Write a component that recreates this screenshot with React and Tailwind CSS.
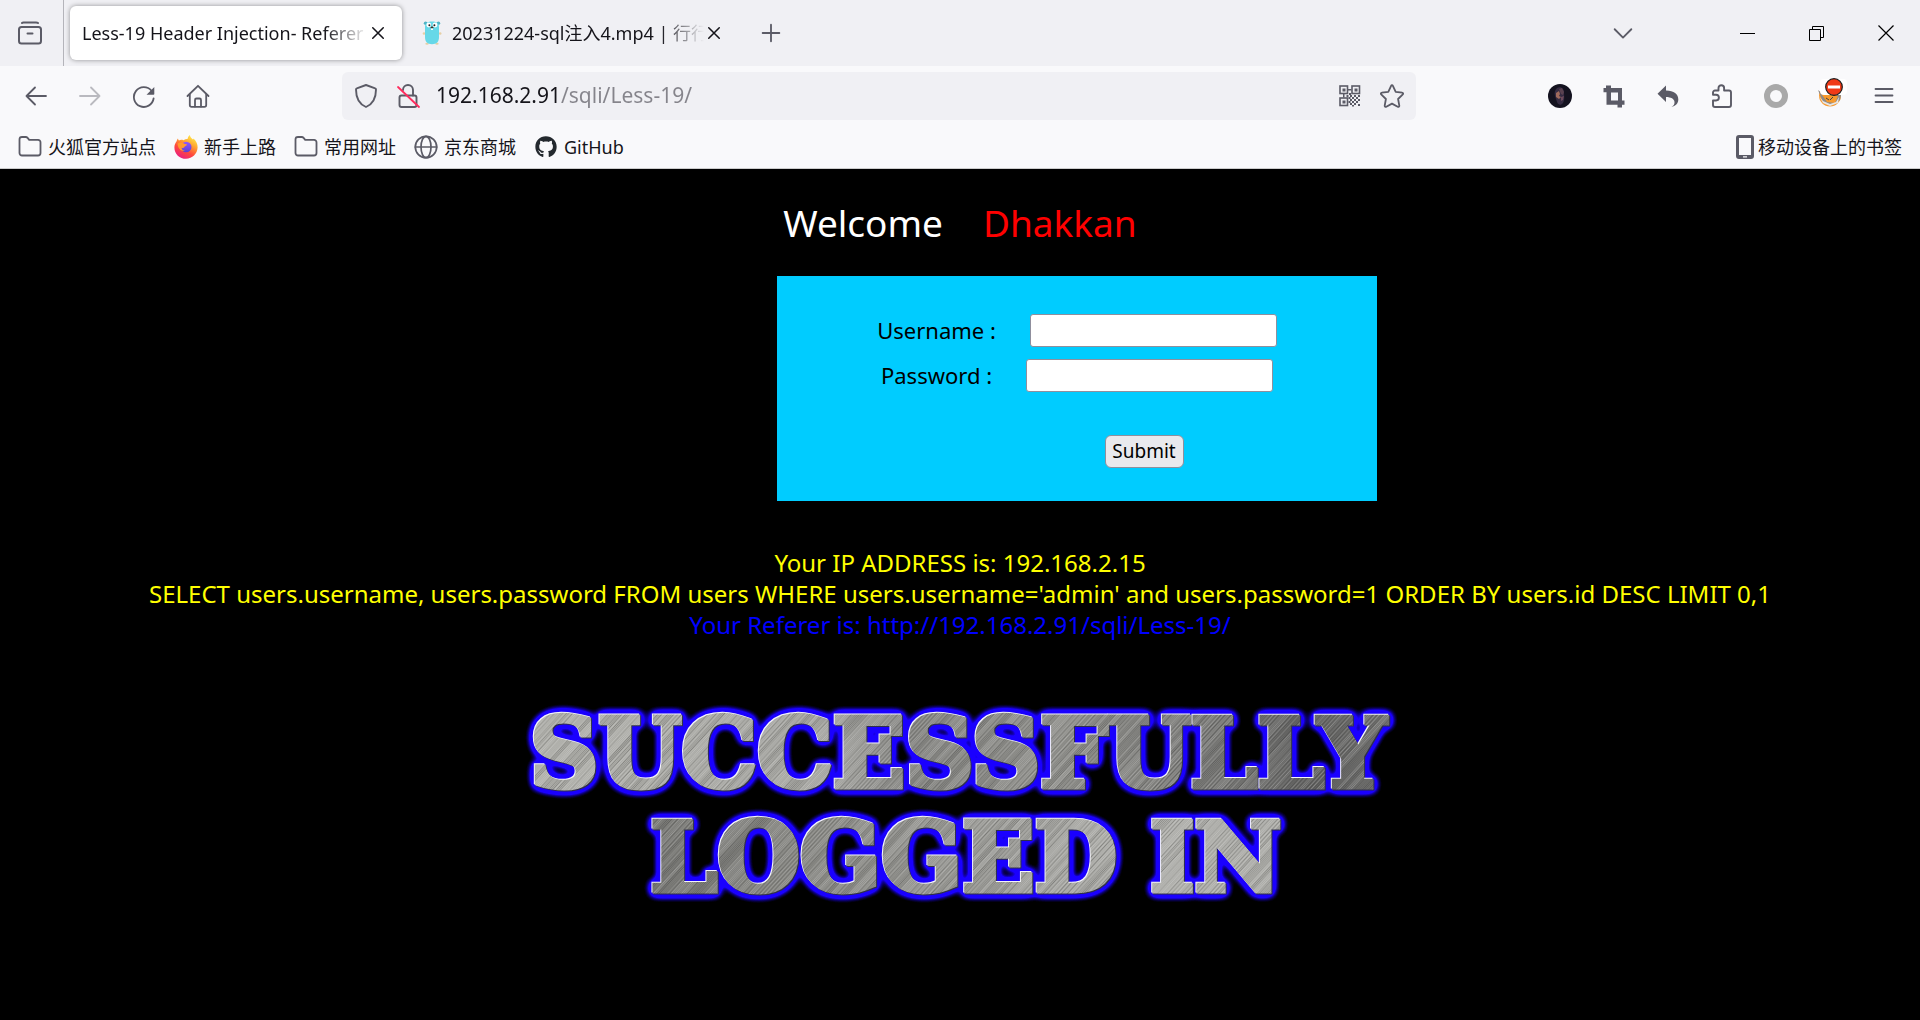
import React from 'react';
import { FaGithub } from 'react-icons/fa';

const line = { fill: 'none', stroke: 'currentColor', strokeWidth: 1.5, strokeLinecap: 'round', strokeLinejoin: 'round' };

function Icon({ children, size = 24, className = '' }) {
  return (
    <svg width={size} height={size} viewBox="0 0 24 24" className={`shrink-0 ${className}`} aria-hidden="true">
      {children}
    </svg>
  );
}

const FirefoxView = () => (
  <Icon>
    <g {...line} strokeWidth="2">
      <path d="M4 1.500C4.600 .9 5 1 6 1h12c1 0 1.400 0 2 .5" transform="translate(0 .5)" />
      <rect x="1" y="6" width="22" height="16.500" rx="2.500" />
      <path d="M9.500 12.500h5" />
    </g>
  </Icon>
);

const Close = () => (
  <Icon size={14}>
    <path d="M3 3l18 18M21 3L3 21" {...line} strokeWidth="2.600" />
  </Icon>
);

const Gopher = () => (
  <svg width="20" height="24" viewBox="0 0 20 24" className="shrink-0" aria-hidden="true">
    <g fill="#e6cfa5">
      <circle cx="2" cy="12.500" r="1.300" />
      <circle cx="18.200" cy="12.500" r="1.300" />
      <ellipse cx="5" cy="22.800" rx="1.700" ry="1" />
      <ellipse cx="15" cy="22.800" rx="1.700" ry="1" />
    </g>
    <circle cx="3.600" cy="2.200" r="1.800" fill="#4fb3c4" />
    <circle cx="16.400" cy="2.200" r="1.800" fill="#4fb3c4" />
    <path d="M3 6C3 2 6 .6 10 .6S17 2 17 6v10c0 5-2.500 7.200-7 7.200S3 21 3 16z" fill="#66d8e8" />
    <circle cx="6.800" cy="4" r="2.400" fill="#fff" />
    <circle cx="13" cy="4" r="2.400" fill="#fff" />
    <circle cx="7.400" cy="4.300" r="1" fill="#222" />
    <circle cx="12.400" cy="4.300" r="1" fill="#222" />
    <ellipse cx="10" cy="6.600" rx="1.500" ry="1" fill="#3b3226" />
    <rect x="9" y="7.400" width="2" height="1.600" fill="#fff" />
  </svg>
);

const Folder = () => (
  <Icon>
    <path
      d="M1.500 18V4.500A2.500 2.500 0 0 1 4 2h3.700c.8 0 1.400.3 1.900.9l1.600 1.900H20A2.500 2.500 0 0 1 22.500 7.500V18A2.500 2.500 0 0 1 20 20.500H4A2.500 2.500 0 0 1 1.500 18z"
      {...line}
      strokeWidth="1.800"
    />
  </Icon>
);

const Firefox = () => (
  <Icon>
    <defs>
      <linearGradient id="ffBody" x1=".8" y1="0" x2=".25" y2="1">
        <stop offset="0" stopColor="#fff44f" />
        <stop offset=".35" stopColor="#ffa430" />
        <stop offset=".65" stopColor="#ff4a3c" />
        <stop offset="1" stopColor="#e81a86" />
      </linearGradient>
      <linearGradient id="ffGlobe" x1="0" y1="0" x2="0" y2="1">
        <stop offset="0" stopColor="#9059ff" />
        <stop offset="1" stopColor="#5b3fd1" />
      </linearGradient>
    </defs>
    <path
      d="M2.600 6.200C3 4.600 3.800 3.600 4 3.400c.1 1 .5 1.600 1 2 1-.7 3-.8 4.500-.2 1.500-1 3-1.400 4-1.200C14 2 14.800.7 15.800 0c.3 2 1.500 3.200 3.200 4.600.4-.2.500-.6.500-1C22.300 6.200 23.700 9.400 23.600 12.600 23.300 19 18.300 23.800 12 23.800S.4 19 .4 12.400C.4 10 1.200 8 2.600 6.200z"
      fill="url(#ffBody)"
    />
    <circle cx="12.200" cy="12" r="5.300" fill="url(#ffGlobe)" />
    <path d="M3.600 8.600c2-1.700 5-1.400 6.600.2 1.400.5 2.800.3 2.800 1 0 1-2 1-2.500 2-.4 1.300-1.800 1.400-3 .9.3 1.700 1.700 3 3.600 3.200-3.500.9-7.300-1.700-7.500-7.300z" fill="#ff9a2e" />
  </Icon>
);

const Globe = () => (
  <Icon>
    <g {...line} strokeWidth="1.700">
      <circle cx="12" cy="12" r="10.700" />
      <ellipse cx="12" cy="12" rx="5" ry="10.700" />
      <path d="M1.300 12h21.400" />
    </g>
  </Icon>
);

const Phone = () => (
  <svg width="18" height="24" viewBox="0 0 18 24" className="shrink-0" aria-hidden="true">
    <path fillRule="evenodd" fill="currentColor" d="M3 0h12a3 3 0 0 1 3 3v18a3 3 0 0 1-3 3H3a3 3 0 0 1-3-3V3a3 3 0 0 1 3-3zM3 3v17h12V3zM7 21.300v1.200h4v-1.200z" />
  </svg>
);

const Back = () => (
  <Icon>
    <path d="M22 12H2.500M11 3.500L2.500 12l8.500 8.500" {...line} strokeWidth="1.800" />
  </Icon>
);

const Forward = () => (
  <Icon>
    <path d="M2 12h19.500M13 3.500l8.500 8.500-8.500 8.500" {...line} strokeWidth="1.800" />
  </Icon>
);

const Reload = () => (
  <Icon>
    <path d="M21.600 14.500A9.900 9.900 0 1 1 19.500 6.800" {...line} strokeWidth="1.800" />
    <path d="M22.300 3v7a.8.8 0 0 1-.8.800h-7z" fill="currentColor" />
  </Icon>
);

const Home = () => (
  <Icon>
    <g {...line} strokeWidth="1.800">
      <path d="M1.500 12L12 1.800 22.500 12" />
      <path d="M3.800 10.500V21a1.800 1.800 0 0 0 1.800 1.800h12.800a1.800 1.800 0 0 0 1.800-1.800V10.500" />
      <path d="M9 22.500V16a1.500 1.500 0 0 1 1.500-1.500h3A1.500 1.500 0 0 1 15 16v6.500" />
    </g>
  </Icon>
);

const Shield = () => (
  <Icon>
    <path d="M12 1l9.200 3.300c.6.200.8.600.8 1.200C22 14 19 20 12 23 5 20 2 14 2 5.500c0-.6.200-1 .8-1.200z" {...line} strokeWidth="1.900" />
  </Icon>
);

const InsecureLock = () => (
  <Icon>
    <g {...line} strokeWidth="1.900">
      <rect x="3.500" y="11.500" width="17" height="11.500" rx="2" />
      <path d="M7 6a5 5 0 0 1 10 0v5.500" />
    </g>
    <path d="M2 3l21 20" stroke="#ff2b5d" strokeWidth="1.800" strokeLinecap="round" />
  </Icon>
);

const QrCode = () => (
  <Icon>
    <g fill="none" stroke="currentColor" strokeWidth="1.600">
      <rect x="2" y="2" width="7.500" height="7.500" />
      <rect x="14" y="2" width="7.500" height="7.500" />
      <rect x="2" y="14" width="7.500" height="7.500" />
    </g>
    <path
      fill="currentColor"
      d="M4.500 4.500h3v3h-3zM16.500 4.500h3v3h-3zM4.500 16.500h3v3h-3zM10 5h3.500v1.500H10zM5 10h1.500v3.500H5zM8.500 11h2v2h-2zM12 11h2v2h-2zM16 11h2v2h-2zM20 11h2v2h-2zM10.500 13h2v2h-2zM14 13h2v2h-2zM18 13h2v2h-2zM12 15h2v2h-2zM16 15h2v2h-2zM20 15h2v2h-2zM10.500 17h2v2h-2zM14 17h2v2h-2zM18 17h2v2h-2zM12 19h2v2h-2zM16 19h2v2h-2zM20 20h2v2h-2zM14 21h2v1.500h-2zM11 9h2v2h-2z"
    />
  </Icon>
);

const Star = () => (
  <Icon>
    <path
      d="M11.100 1.800c.4-.8 1.400-.8 1.800 0l2.800 6 6.500.9c.9.100 1.200 1.100.6 1.700l-4.700 4.600 1.200 6.600c.1.900-.8 1.500-1.600 1.100L12 19.600l-5.700 3.100c-.8.400-1.700-.2-1.600-1.100l1.200-6.600L1.200 10.400c-.6-.6-.3-1.600.6-1.700l6.500-.9z"
      {...line}
      strokeWidth="1.800"
    />
  </Icon>
);

const Avatar = () => (
  <Icon>
    <circle cx="12" cy="12" r="12" fill="#14121f" />
    <path d="M9 4c3-2 7 0 7 4s1 8-1 11-5 2-6-1-1-3-2-6 0-6.500 2-8z" fill="#352b42" />
    <path d="M8 9l3-2 1 3-1 2 2 1-2 2-3-2z" fill="#a06a5c" />
    <path d="M11 5l3-1 2 4-1 3-2-1z" fill="#5a4250" />
    <path d="M13 13l3-1-1 4-2 1z" fill="#6d4a5c" />
  </Icon>
);

const Crop = () => (
  <Icon>
    <path fillRule="evenodd" fill="currentColor" d="M4 1.500h5V4h11v12.500h2.500v4.300H20v2.700h-4.500v-2.700H4.500V8.300H1.500V4H4zM9 8.500v8h7v-8z" />
  </Icon>
);

const Undo = () => (
  <Icon>
    <path fill="currentColor" d="M10 1.500v5c8 .2 12.300 3.600 12.300 9 0 4-3 6.800-6.800 7.400 2-1 3.200-2.700 3-4.900-.3-3-3.500-4.800-8.500-4.900v5L1.500 9.800z" />
  </Icon>
);

const Puzzle = () => (
  <Icon>
    <path
      d="M3 10V8.500C3 7.400 3.900 6.500 5 6.500h3.500V4a2.800 2.800 0 0 1 5.600 0v2.500H19c1.100 0 2 .9 2 2V21c0 1.100-.9 2-2 2H5c-1.100 0-2-.9-2-2v-4.500h3a2.900 2.900 0 0 0 0-5.800H3z"
      {...line}
      strokeWidth="1.900"
    />
  </Icon>
);

const Ring = () => (
  <Icon>
    <circle cx="12" cy="12" r="9" fill="none" stroke="#a9a9a9" strokeWidth="6" />
  </Icon>
);

const Fox = () => (
  <Icon>
    <circle cx="12" cy="11.500" r="11" fill="#f79b32" />
    <path d="M0 6l5 4 7-2 7 2 5-4-2 10-5 4-6 1-6-3z" fill="#8d8a88" />
    <path d="M2 8l5 3 5-1 8 2-3 7-8-1z" fill="#f8992b" />
    <path d="M1 12l4 5 7 3 6-2 3-5-1 6-8 3-7-3z" fill="#e9e6e3" />
    <path d="M8 14l3 2M15 13l-3 3" stroke="#444" strokeWidth="1" />
  </Icon>
);

const Blocked = () => (
  <span className="absolute bottom-[3px] left-[17px] flex h-4 w-[27px] items-center justify-center rounded-sm bg-white">
    <svg width="18" height="18" viewBox="0 0 18 18" className="shrink-0" aria-hidden="true">
      <circle cx="9" cy="9" r="8.300" fill="#f03a17" stroke="#1c1c1c" strokeWidth="1.200" />
      <rect x="3" y="7.500" width="12" height="3" fill="#fff" />
    </svg>
  </span>
);

const Menu = () => (
  <Icon>
    <path d="M3.500 5h17M3.500 11.500h17M3.500 18h17" {...line} strokeWidth="1.800" />
  </Icon>
);

function ToolButton({ label, children, className = '' }) {
  return (
    <button type="button" aria-label={label} className={`flex h-12 w-[54px] shrink-0 items-center justify-center ${className}`}>
      {children}
    </button>
  );
}

function Tab({ title, icon, active }) {
  return (
    <div
      role="tab"
      aria-selected={active}
      className={`flex h-[54px] w-[332px] shrink-0 items-center rounded-md pr-3.5 pl-3 text-lg ${active ? 'bg-white shadow-[0_0_5px_rgba(0,0,0,0.4)]' : ''}`}
    >
      {icon && <span className="mr-2.5 ml-1 flex">{icon}</span>}
      <span className="min-w-0 flex-1 overflow-hidden whitespace-nowrap [mask-image:linear-gradient(to_left,transparent,black_44px)]">{title}</span>
      <button type="button" aria-label="关闭标签页" className="flex h-5 w-5 items-center justify-center">
        <Close />
      </button>
    </div>
  );
}

function TabStrip() {
  return (
    <div className="flex h-[66px] items-center bg-[#f0f0f4]">
      <button type="button" aria-label="Firefox View" className="flex h-full w-16 shrink-0 items-center justify-center border-r border-[#b4b4ba] pr-1 text-[#5b5b66]">
        <FirefoxView />
      </button>
      <div role="tablist" className="ml-1.5 flex gap-1">
        <Tab active title="Less-19 Header Injection- Referer" />
        <Tab title="20231224-sql注入4.mp4 | 行行" icon={<Gopher />} />
      </div>
      <button type="button" aria-label="新标签页" className="ml-[11px] flex h-11 w-11 items-center justify-center text-[#5b5b66]">
        <Icon size={20}>
          <path d="M12 2v20M2 12h20" {...line} strokeWidth="2.200" />
        </Icon>
      </button>
      <div className="ml-auto flex">
        <button type="button" aria-label="列出所有标签页" className="mr-[68px] flex h-11 w-11 items-center justify-center text-[#5b5b66]">
          <Icon size={20}>
            <path d="M2 7.500l10 10 10-10" {...line} strokeWidth="2.200" />
          </Icon>
        </button>
        <button type="button" aria-label="最小化" className="flex h-11 w-[69px] items-center justify-center">
          <svg width="15" height="15" aria-hidden="true"><path d="M0 7.500h15" stroke="#000" /></svg>
        </button>
        <button type="button" aria-label="还原" className="flex h-11 w-[69px] items-center justify-center">
          <svg width="15" height="15" fill="none" stroke="#000" aria-hidden="true">
            <path d="M.5 3.500h11v11H.5zM3.500 3.500v-3h11v11h-3" />
          </svg>
        </button>
        <button type="button" aria-label="关闭" className="flex h-11 w-[69px] items-center justify-center">
          <svg width="16" height="16" stroke="#000" strokeWidth="1.200" aria-hidden="true"><path d="M.5 .5l15 15M15.500 .5l-15 15" /></svg>
        </button>
      </div>
    </div>
  );
}

function NavBar() {
  return (
    <div className="flex items-center px-[9px] pt-1.5 text-[#5b5b66]">
      <ToolButton label="后退"><Back /></ToolButton>
      <ToolButton label="前进" className="opacity-40"><Forward /></ToolButton>
      <ToolButton label="重新加载"><Reload /></ToolButton>
      <ToolButton label="主页"><Home /></ToolButton>
      <div className="mx-[117px] flex h-12 min-w-0 flex-1 items-center rounded-md bg-[#f0f0f4] pr-3">
        <button type="button" aria-label="跟踪保护" className="ml-3 flex"><Shield /></button>
        <button type="button" aria-label="连接不安全" className="mr-4 ml-[18px] flex"><InsecureLock /></button>
        <input
          type="text"
          aria-label="地址"
          defaultValue="192.168.2.91/sqli/Less-19/"
          className="min-w-0 flex-1 bg-[linear-gradient(to_right,#15141a_125px,#85848b_125px)] bg-clip-text text-[21px] text-transparent outline-none"
        />
        <button type="button" aria-label="二维码" className="mr-[18px] flex"><QrCode /></button>
        <button type="button" aria-label="为此页添加书签" className="flex"><Star /></button>
      </div>
      <ToolButton label="账户"><Avatar /></ToolButton>
      <ToolButton label="截图"><Crop /></ToolButton>
      <ToolButton label="撤销"><Undo /></ToolButton>
      <ToolButton label="扩展"><Puzzle /></ToolButton>
      <ToolButton label="代理"><Ring /></ToolButton>
      <ToolButton label="FoxyProxy">
        <span className="relative flex h-6 w-[54px] justify-center">
          <Fox />
          <span className="absolute inset-x-0 bottom-2.5 h-5"><Blocked /></span>
        </span>
      </ToolButton>
      <ToolButton label="菜单"><Menu /></ToolButton>
    </div>
  );
}

const bookmarks = [
  { label: '火狐官方站点', icon: <Folder /> },
  { label: '新手上路', icon: <Firefox /> },
  { label: '常用网址', icon: <Folder /> },
  { label: '京东商城', icon: <Globe /> },
  { label: 'GitHub', icon: <FaGithub size={22} color="#24292e" className="mx-px" /> },
];

function Bookmarks() {
  return (
    <nav className="flex h-[49px] items-center gap-[18px] border-b border-[#cccccc] px-[18px] pt-1.5 text-lg text-[#15141a]">
      {bookmarks.map((b) => (
        <a key={b.label} href="#" className="flex items-center gap-1.5 whitespace-nowrap">
          <span className="flex text-[#5b5b66]">{b.icon}</span>
          {b.label}
        </a>
      ))}
      <a href="#" className="ml-auto flex items-center gap-1 whitespace-nowrap">
        <span className="flex text-[#5b5b66]"><Phone /></span>
        移动设备上的书签
      </a>
    </nav>
  );
}

const streaks = Array.from({ length: 580 }, (_, i) => {
  const r = Math.abs(Math.sin(i * 12.9898) * 43758.5453) % 1;
  const q = Math.abs(Math.sin(i * 78.233) * 12345.678) % 1;
  return { x: i * 2 - 240, light: q > 0.5, alpha: 0.04 + r * 0.2 };
});

function Brushed({ id, stops }) {
  return (
    <>
      <linearGradient id={`${id}Tone`} x1="0" y1="0" x2="1" y2="0">
        {stops.map(([offset, color]) => <stop key={offset} offset={offset} stopColor={color} />)}
      </linearGradient>
      <pattern id={id} patternUnits="userSpaceOnUse" width="920" height="240">
        <rect width="920" height="240" fill={`url(#${id}Tone)`} />
        {streaks.map((s) => (
          <path key={s.x} d={`M${s.x} 240l220-240`} stroke={s.light ? '#ffffff' : '#000000'} strokeOpacity={s.alpha} strokeWidth="1" />
        ))}
      </pattern>
    </>
  );
}

function Banner() {
  return (
    <svg viewBox="0 0 920 240" className="w-[920px] max-w-full" role="img" aria-label="Successfully logged in">
      <defs>
        <Brushed id="metalTop" stops={[[0, '#b0b0ab'], [0.35, '#a6a6a2'], [0.45, '#858582'], [0.6, '#92928e'], [0.8, '#787876'], [0.88, '#626261'], [1, '#7a7a78']]} />
        <Brushed id="metalBottom" stops={[[0.12, '#767673'], [0.3, '#858581'], [0.5, '#9a9a96'], [0.7, '#b0b0ac'], [1, '#a6a6a2']]} />
        <filter id="glow" filterUnits="userSpaceOnUse" x="0" y="0" width="920" height="240" colorInterpolationFilters="sRGB">
          <feGaussianBlur in="SourceAlpha" stdDeviation="5" result="soft" />
          <feComponentTransfer in="soft" result="halo"><feFuncA type="linear" slope="7" intercept="-0.15" /></feComponentTransfer>
          <feFlood floodColor="#1a00ff" />
          <feComposite in2="halo" operator="in" result="blue" />
          <feOffset in="SourceAlpha" dx="-1" dy="-1" result="up" />
          <feFlood floodColor="#f4f4fa" />
          <feComposite in2="up" operator="in" result="rim" />
          <feOffset in="SourceAlpha" dx="1" dy="1" result="down" />
          <feFlood floodColor="#30304a" />
          <feComposite in2="down" operator="in" result="shade" />
          <feMerge>
            <feMergeNode in="blue" />
            <feMergeNode in="shade" />
            <feMergeNode in="rim" />
            <feMergeNode in="SourceGraphic" />
          </feMerge>
        </filter>
      </defs>
      <g fontFamily="'DejaVu Serif', serif" fontWeight="700" fontSize="95" textAnchor="middle" strokeWidth="5" filter="url(#glow)">
        <text x="458" y="97" fill="url(#metalTop)" stroke="url(#metalTop)">SUCCESSFULLY</text>
        <text x="466" y="201" fill="url(#metalBottom)" stroke="url(#metalBottom)">LOGGED IN</text>
      </g>
    </svg>
  );
}

function Field({ id, label, type }) {
  return (
    <div className="flex h-[33px] items-center justify-center gap-[34px]">
      <label htmlFor={id}>{label}</label>
      <input id={id} type={type} className="h-[33px] w-[247px] rounded-[3px] border border-[#8f8f9d] bg-white px-1 text-lg" />
    </div>
  );
}

export default function App() {
  return (
    <div className="flex min-h-screen flex-col bg-black font-['Noto_Sans','Noto_Sans_CJK_SC',sans-serif] text-[#15141a]">
      <header className="bg-[#f9f9fb]">
        <TabStrip />
        <NavBar />
        <Bookmarks />
      </header>
      <main className="flex flex-1 flex-col items-center pt-[30px]">
        <h1 className="flex gap-10 text-[37px] leading-[48px] text-white">
          Welcome <span className="text-[#ff0000]">Dhakkan</span>
        </h1>
        <div className="mt-[29px] flex w-full justify-center pl-[234px]">
          <form className="flex w-[600px] flex-col gap-3 bg-[#00ccff] pt-[38px] pb-[33px] text-[22px] text-black" onSubmit={(e) => e.preventDefault()}>
            <Field id="uname" label="Username :" type="text" />
            <Field id="passwd" label="Password :" type="password" />
            <div className="mt-[31px] flex justify-center pl-[134px]">
              <button type="submit" className="flex h-[33px] w-[79px] items-center justify-center rounded-md border border-[#8f8f9d] bg-[#e9e9ed] text-[19px]">
                Submit
              </button>
            </div>
          </form>
        </div>
        <div className="mt-[46px] text-center text-2xl leading-[31px] text-[#ffff00]">
          <p>Your IP ADDRESS is: 192.168.2.15</p>
          <p>SELECT users.username, users.password FROM users WHERE users.username='admin' and users.password=1 ORDER BY users.id DESC LIMIT 0,1</p>
          <p className="text-[#0000ff]">Your Referer is: http://192.168.2.91/sqli/Less-19/</p>
        </div>
        <div className="mt-[50px]">
          <Banner />
        </div>
      </main>
    </div>
  );
}
